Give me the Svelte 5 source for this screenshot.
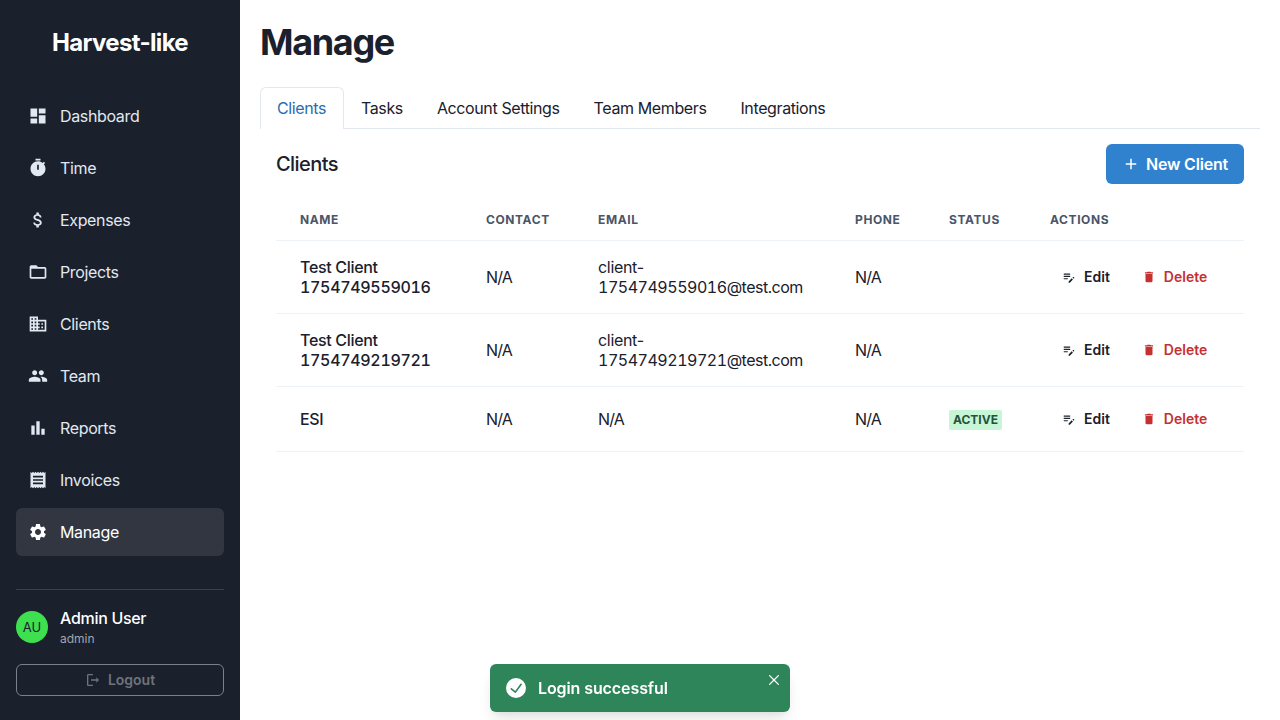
<script lang="ts">
  const icons: Record<string, string> = {
    dashboard: 'M3 13h8V3H3v10zm0 8h8v-6H3v6zm10 0h8V11h-8v10zm0-18v6h8V3h-8z',
    timer: 'M9 1h6v2H9zm10.03 6.39 1.42-1.42c-.43-.51-.9-.99-1.41-1.41l-1.42 1.42C16.07 4.74 14.12 4 12 4c-4.97 0-9 4.03-9 9s4.02 9 9 9 9-4.03 9-9c0-2.12-.74-4.07-1.97-5.61zM13 14h-2V8h2v6z',
    money: 'M11.8 10.9c-2.27-.59-3-1.2-3-2.15 0-1.09 1.01-1.85 2.7-1.85 1.78 0 2.44.85 2.5 2.1h2.21c-.07-1.72-1.12-3.3-3.21-3.81V3h-3v2.16c-1.94.42-3.5 1.68-3.5 3.61 0 2.31 1.91 3.46 4.7 4.13 2.5.6 3 1.48 3 2.41 0 .69-.49 1.79-2.7 1.79-2.06 0-2.87-.92-2.98-2.1h-2.2c.12 2.19 1.76 3.42 3.68 3.83V21h3v-2.15c1.95-.37 3.5-1.5 3.5-3.55 0-2.84-2.43-3.81-4.7-4.4z',
    folder: 'M20 6h-8l-2-2H4c-1.1 0-1.99.9-1.99 2L2 18c0 1.1.9 2 2 2h16c1.1 0 2-.9 2-2V8c0-1.1-.9-2-2-2zm0 12H4V8h16v10z',
    business: 'M12 7V3H2v18h20V7H12zM6 19H4v-2h2v2zm0-4H4v-2h2v2zm0-4H4V9h2v2zm0-4H4V5h2v2zm4 12H8v-2h2v2zm0-4H8v-2h2v2zm0-4H8V9h2v2zm0-4H8V5h2v2zm10 12h-8v-2h2v-2h-2v-2h2v-2h-2V9h8v10zm-2-8h-2v2h2v-2zm0 4h-2v2h2v-2z',
    people: 'M16 11c1.66 0 2.99-1.34 2.99-3S17.66 5 16 5c-1.66 0-3 1.34-3 3s1.34 3 3 3zm-8 0c1.66 0 2.99-1.34 2.99-3S9.66 5 8 5C6.34 5 5 6.34 5 8s1.34 3 3 3zm0 2c-2.33 0-7 1.17-7 3.5V19h14v-2.5c0-2.33-4.67-3.5-7-3.5zm8 0c-.29 0-.62.02-.97.05 1.16.84 1.97 1.97 1.97 3.45V19h6v-2.5c0-2.33-4.67-3.5-7-3.5z',
    chart: 'M4 9h4v11H4zm12 4h4v7h-4zm-6-9h4v16h-4z',
    receipt: 'M18 17H6v-2h12v2zm0-4H6v-2h12v2zm0-4H6V7h12v2zM3 22l1.5-1.5L6 22l1.5-1.5L9 22l1.5-1.5L12 22l1.5-1.5L15 22l1.5-1.5L18 22l1.5-1.5L21 22V2l-1.5 1.5L18 2l-1.5 1.5L15 2l-1.5 1.5L12 2l-1.5 1.5L9 2 7.5 3.5 6 2 4.5 3.5 3 2v20z',
    settings: 'M19.14 12.94c.04-.3.06-.61.06-.94 0-.32-.02-.64-.07-.94l2.03-1.58c.18-.14.23-.41.12-.61l-1.92-3.32c-.12-.22-.37-.29-.59-.22l-2.39.96c-.5-.38-1.03-.7-1.62-.94l-.36-2.54c-.04-.24-.24-.41-.48-.41h-3.84c-.24 0-.43.17-.47.41l-.36 2.54c-.59.24-1.13.57-1.62.94l-2.39-.96c-.22-.08-.47 0-.59.22L2.74 8.87c-.12.21-.08.47.12.61l2.03 1.58c-.05.3-.09.63-.09.94s.02.64.07.94l-2.03 1.58c-.18.14-.23.41-.12.61l1.92 3.32c.12.22.37.29.59.22l2.39-.96c.5.38 1.03.7 1.62.94l.36 2.54c.05.24.24.41.48.41h3.84c.24 0 .44-.17.47-.41l.36-2.54c.59-.24 1.13-.56 1.62-.94l2.39.96c.22.08.47 0 .59-.22l1.92-3.32c.12-.22.07-.47-.12-.61l-2.01-1.58zM12 15.6c-1.98 0-3.6-1.62-3.6-3.6s1.62-3.6 3.6-3.6 3.6 1.62 3.6 3.6-1.62 3.6-3.6 3.6z',
    logout: 'M5 5h7V3H5c-1.1 0-2 .9-2 2v14c0 1.1.9 2 2 2h7v-2H5V5zm16 7l-4-4v3H9v2h8v3l4-4z',
    edit: 'M3 10h11v2H3v-2zm0-2h11V6H3v2zm0 8h7v-2H3v2zm15.01-3.13.71-.71c.39-.39 1.02-.39 1.41 0l.71.71c.39.39.39 1.02 0 1.41l-.71.71-2.12-2.12zm-1.41 1.41L11.3 19.58V21.7h2.12l5.3-5.3-2.12-2.12z',
    trash: 'M6 19c0 1.1.9 2 2 2h8c1.1 0 2-.9 2-2V7H6v12zM19 4h-3.5l-1-1h-5l-1 1H5v2h14V4z',
    add: 'M19 13h-6v6h-2v-6H5v-2h6V5h2v6h6v2z',
    check: 'M12,0A12,12,0,1,0,24,12,12.014,12.014,0,0,0,12,0Zm6.927,8.2-6.845,9.289a1.011,1.011,0,0,1-1.43.188L5.764,13.769a1,1,0,1,1,1.25-1.562l4.076,3.261,6.227-8.451A1,1,0,1,1,18.927,8.2Z',
    close: 'M.439,21.44a1.5,1.5,0,0,0,2.122,2.121L11.823,14.3a.25.25,0,0,1,.354,0l9.262,9.263a1.5,1.5,0,1,0,2.122-2.121L14.3,12.177a.25.25,0,0,1,0-.354l9.263-9.262A1.5,1.5,0,0,0,21.439.44L12.177,9.7a.25.25,0,0,1-.354,0L2.561.44A1.5,1.5,0,0,0,.439,2.561L9.7,11.823a.25.25,0,0,1,0,.354Z'
  };

  const nav = [
    { label: 'Dashboard', icon: 'dashboard' },
    { label: 'Time', icon: 'timer' },
    { label: 'Expenses', icon: 'money' },
    { label: 'Projects', icon: 'folder' },
    { label: 'Clients', icon: 'business' },
    { label: 'Team', icon: 'people' },
    { label: 'Reports', icon: 'chart' },
    { label: 'Invoices', icon: 'receipt' },
    { label: 'Manage', icon: 'settings', active: true }
  ];

  const tabs = ['Clients', 'Tasks', 'Account Settings', 'Team Members', 'Integrations'];

  const clients = [
    { name: 'Test Client 1754749559016', contact: 'N/A', emailStart: 'client-', emailRest: '1754749559016@test.com', phone: 'N/A', active: false },
    { name: 'Test Client 1754749219721', contact: 'N/A', emailStart: 'client-', emailRest: '1754749219721@test.com', phone: 'N/A', active: false },
    { name: 'ESI', contact: 'N/A', emailStart: '', emailRest: 'N/A', phone: 'N/A', active: true }
  ];
</script>

{#snippet icon(name: string, size: number)}
  <svg class="icon" width={size} height={size} viewBox="0 0 24 24" fill="currentColor" aria-hidden="true">
    <path d={icons[name]} />
  </svg>
{/snippet}

<div class="layout">
  <aside class="sidebar">
    <div class="brand">Harvest-like</div>
    <nav class="nav">
      {#each nav as item}
        <div class="nav-item" class:active={item.active}>
          {@render icon(item.icon, 20)}
          <span>{item.label}</span>
        </div>
      {/each}
    </nav>
    <div class="user-box">
      <div class="user">
        <div class="avatar">AU</div>
        <div class="user-text">
          <div class="user-name">Admin User</div>
          <div class="user-role">admin</div>
        </div>
      </div>
      <button class="logout">
        {@render icon('logout', 16)}
        <span>Logout</span>
      </button>
    </div>
  </aside>

  <main class="main">
    <h1>Manage</h1>
    <div class="tabs">
      {#each tabs as tab, i}
        <div class="tab" class:selected={i === 0}>{tab}</div>
      {/each}
    </div>
    <section class="panel">
      <div class="panel-head">
        <h2>Clients</h2>
        <button class="new-btn">
          {@render icon('add', 18)}
          <span>New Client</span>
        </button>
      </div>
      <table>
        <colgroup>
          <col style="width: 186px" />
          <col style="width: 112px" />
          <col style="width: 257px" />
          <col style="width: 94px" />
          <col style="width: 101px" />
          <col />
        </colgroup>
        <thead>
          <tr>
            <th>Name</th>
            <th>Contact</th>
            <th>Email</th>
            <th>Phone</th>
            <th>Status</th>
            <th>Actions</th>
          </tr>
        </thead>
        <tbody>
          {#each clients as c}
            <tr>
              <td class="name">{c.name}</td>
              <td class="na">{c.contact}</td>
              <td>
                {#if c.emailStart}
                  <span>{c.emailStart}</span><span class="digits">{c.emailRest}</span>
                {:else}
                  <span class="na">{c.emailRest}</span>
                {/if}
              </td>
              <td class="na">{c.phone}</td>
              <td>
                {#if c.active}
                  <span class="badge">Active</span>
                {/if}
              </td>
              <td>
                <div class="actions">
                  <button class="act edit">
                    {@render icon('edit', 14)}
                    <span>Edit</span>
                  </button>
                  <button class="act del">
                    {@render icon('trash', 14)}
                    <span>Delete</span>
                  </button>
                </div>
              </td>
            </tr>
          {/each}
        </tbody>
      </table>
    </section>
  </main>

  <div class="toast">
    {@render icon('check', 20)}
    <span class="toast-text">Login successful</span>
    <span class="toast-close">{@render icon('close', 10)}</span>
  </div>
</div>

<style>
  :global(body) {
    font-family: Inter, "Liberation Sans", sans-serif;
    color: #1a202c;
    background: #fff;
  }

  .layout { display: flex; height: 720px; overflow: hidden; }
  .icon { display: block; flex-shrink: 0; }

  .sidebar {
    width: 240px;
    flex-shrink: 0;
    box-sizing: border-box;
    background: #1a202c;
    color: #fff;
    padding: 25px 16px 24px;
    display: flex;
    flex-direction: column;
  }
  .brand {
    font-size: 24px;
    font-weight: 700;
    line-height: 36px;
    letter-spacing: -0.028em;
    text-align: center;
    margin-bottom: 31px;
  }
  .nav { display: flex; flex-direction: column; gap: 4px; }
  .nav-item {
    display: flex;
    align-items: center;
    gap: 12px;
    height: 48px;
    padding: 0 12px;
    border-radius: 6px;
    font-size: 16px;
    letter-spacing: -0.022em;
    color: #e2e8f0;
  }
  .nav-item.active { background: #313641; color: #fff; }

  .user-box { margin-top: auto; border-top: 1px solid #3a404c; padding-top: 17px; }
  .user { display: flex; align-items: center; gap: 12px; }
  .avatar {
    width: 32px;
    height: 32px;
    border-radius: 50%;
    background: #3ee04f;
    color: #1a202c;
    font-size: 13px;
    display: flex;
    align-items: center;
    justify-content: center;
  }
  .user-name { font-size: 16px; font-weight: 500; line-height: 22px; margin-bottom: 2px; letter-spacing: -0.019em; }
  .user-role { font-size: 12px; line-height: 16px; color: #a3a6ae; }
  .logout {
    width: 100%;
    height: 32px;
    margin-top: 17px;
    background: transparent;
    border: 1px solid #7d8088;
    border-radius: 6px;
    color: #6f737c;
    font: 600 14px/16px Inter, sans-serif;
    display: flex;
    align-items: center;
    justify-content: center;
    gap: 7px;
  }

  .main { flex: 1; min-width: 0; padding: 20px; }
  h1 {
    margin: 0 0 23px;
    font-size: 36px;
    font-weight: 700;
    line-height: 44px;
    letter-spacing: -0.037em;
    color: #1a202c;
  }

  .tabs { display: flex; border-bottom: 1px solid #e2e8f0; height: 41px; }
  .tab {
    box-sizing: border-box;
    height: 42px;
    padding: 8px 16px;
    font-size: 16px;
    line-height: 24px;
    letter-spacing: -0.024em;
    border: 1px solid transparent;
    border-bottom: none;
    border-radius: 6px 6px 0 0;
  }
  .tab.selected { color: #2b6cb0; border-color: #e2e8f0; background: #fff; width: 84px; }

  .panel { padding: 15px 16px 16px; }
  .panel-head { display: flex; align-items: center; justify-content: space-between; margin-bottom: 16px; }
  h2 { margin: 0; font-size: 20px; font-weight: 500; letter-spacing: -0.029em; }
  .new-btn {
    height: 40px;
    padding: 0 16px;
    background: #3182ce;
    border: none;
    border-radius: 6px;
    color: #fff;
    font: 600 16px Inter, sans-serif;
    letter-spacing: -0.0125em;
    display: flex;
    align-items: center;
    gap: 6px;
  }

  table { width: 100%; border-collapse: collapse; table-layout: fixed; }
  th {
    padding: 12px 24px;
    text-align: left;
    font-size: 12px;
    line-height: 16px;
    font-weight: 700;
    letter-spacing: 0.05em;
    text-transform: uppercase;
    color: #4a5568;
    border-bottom: 1px solid #edf2f7;
  }
  td {
    padding: 16px 24px;
    font-size: 16px;
    line-height: 20px;
    letter-spacing: -0.02em;
    border-bottom: 1px solid #edf2f7;
    vertical-align: middle;
  }
  .name { font-weight: 500; font-variant-numeric: tabular-nums; }
  .digits { font-variant-numeric: tabular-nums; letter-spacing: -0.03em; }
  .na { letter-spacing: -0.05em; }

  .badge {
    display: inline-block;
    padding: 0 4px;
    background: #c6f6d5;
    color: #22543d;
    font-size: 12px;
    font-weight: 700;
    line-height: 20px;
    letter-spacing: 0;
    text-transform: uppercase;
    border-radius: 2px;
    vertical-align: middle;
  }

  .actions { display: flex; gap: 8px; }
  .act {
    height: 32px;
    padding: 0 12px;
    background: transparent;
    border: none;
    font: 600 14px/16px Inter, sans-serif;
    display: flex;
    align-items: center;
    gap: 8px;
  }
  .edit { color: #1a202c; }
  .del { color: #c53030; }

  .toast {
    position: fixed;
    left: 490px;
    top: 664px;
    width: 300px;
    height: 48px;
    box-sizing: border-box;
    padding: 0 16px;
    background: #2f855a;
    color: #fff;
    border-radius: 6px;
    box-shadow: 0 10px 15px -3px rgba(0, 0, 0, 0.1), 0 4px 6px -2px rgba(0, 0, 0, 0.05);
    display: flex;
    align-items: center;
    gap: 12px;
  }
  .toast-text { font-size: 16px; font-weight: 600; letter-spacing: -0.006em; }
  .toast-close { position: absolute; right: 11px; top: 11px; }
</style>
